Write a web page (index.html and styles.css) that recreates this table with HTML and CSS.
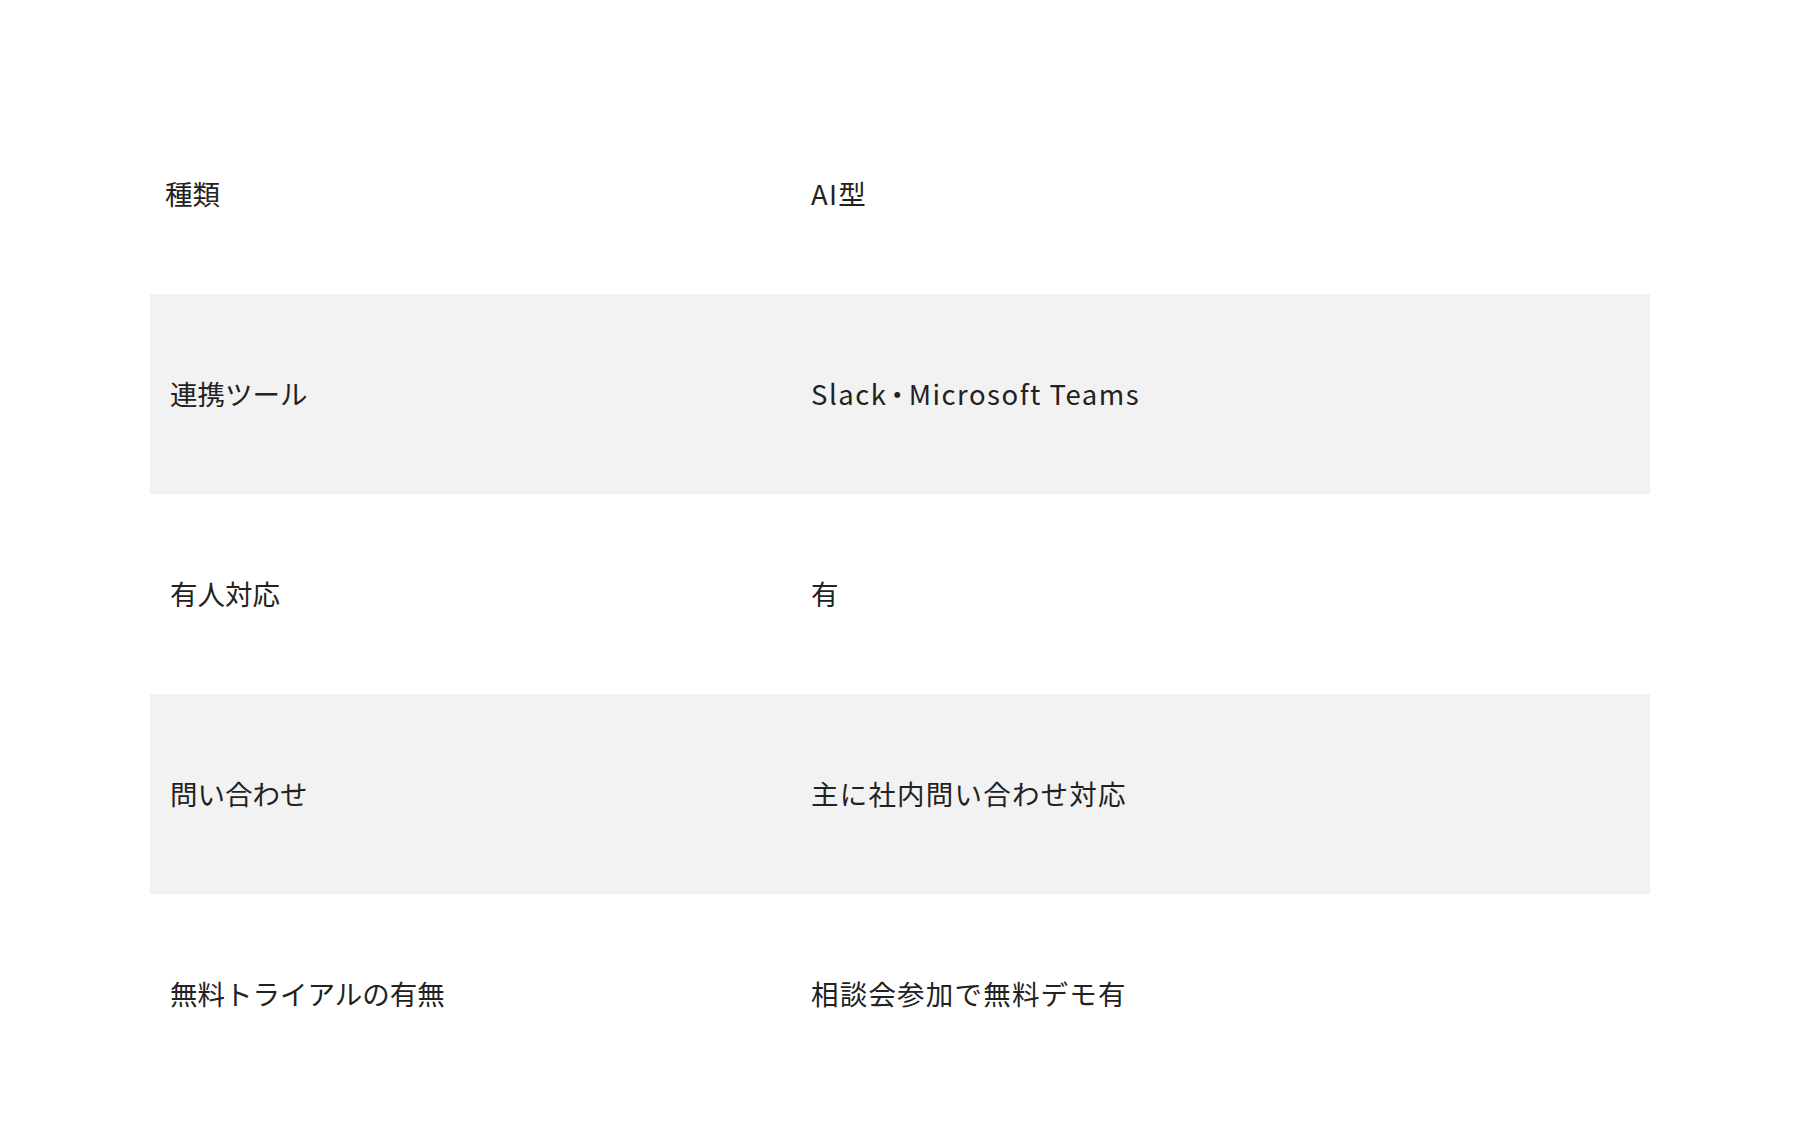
FILE: index.html
```html
<!DOCTYPE html>
<html lang="ja">
<head>
<meta charset="utf-8">
<title>比較表</title>
<link rel="stylesheet" href="styles.css">
</head>
<body>
<main class="page">
  <div class="spec">
    <div class="row">
      <div class="cell label label--first">種類</div>
      <div class="cell value">AI型</div>
    </div>
    <div class="row row--shade">
      <div class="cell label">連携ツール</div>
      <div class="cell value value--latin">Slack<span class="sep">・</span>Microsoft Teams</div>
    </div>
    <div class="row">
      <div class="cell label">有人対応</div>
      <div class="cell value">有</div>
    </div>
    <div class="row row--shade">
      <div class="cell label">問い合わせ</div>
      <div class="cell value">主に社内問い合わせ対応</div>
    </div>
    <div class="row">
      <div class="cell label">無料トライアルの有無</div>
      <div class="cell value">相談会参加で無料デモ有</div>
    </div>
  </div>
</main>
</body>
</html>
```
FILE: styles.css
```css
html, body {
  margin: 0;
  padding: 0;
  background: #ffffff;
}

body {
  font-family: "Noto Sans CJK JP", "Noto Sans", sans-serif;
  color: #222222;
}

.page {
  padding: 94px 150px 44px;
}

.spec {
  display: flex;
  flex-direction: column;
}

.row {
  display: grid;
  grid-template-columns: 640px 1fr;
  height: 200px;
  align-items: center;
}

.row--shade {
  background: #f2f2f2;
}

.cell {
  font-size: 27.5px;
  line-height: 1.5;
  padding: 0 20px;
}

.label--first {
  padding-left: 15px;
}

.value {
  padding-left: 21px;
  letter-spacing: 1.2px;
}

.value--latin {
  letter-spacing: 1.5px;
}

.sep {
  font-feature-settings: "palt";
  margin: 0 3px;
}
```
